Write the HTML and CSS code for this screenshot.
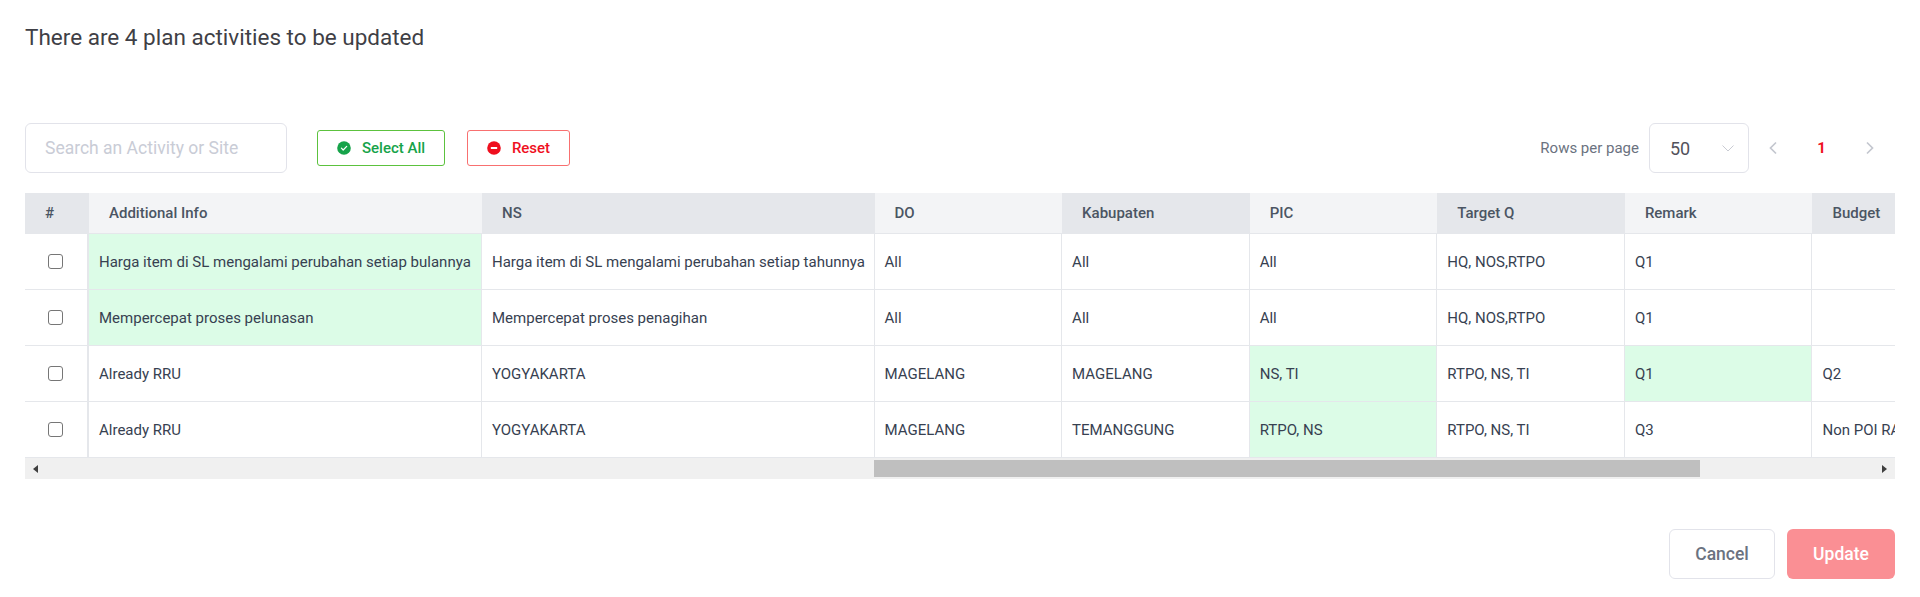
FILE: index.html
```html
<!DOCTYPE html>
<html lang="en">
<head>
<meta charset="utf-8">
<title>Plan activities</title>
<link rel="stylesheet" href="styles.css">
</head>
<body>
<main class="page">
  <h1 class="title">There are 4 plan activities to be updated</h1>
  <div class="toolbar">
    <input class="search" type="text" placeholder="Search an Activity or Site">
    <button class="action action-green" type="button">
      <svg class="action-icon" viewBox="0 0 14 14"><circle cx="7" cy="7" r="6.800" fill="#16a34a"/><path d="M4.400 7.200l1.800 1.800 3.500-3.600" fill="none" stroke="#fff" stroke-width="1.200" stroke-linecap="round" stroke-linejoin="round"/></svg>
      Select All
    </button>
    <button class="action action-red" type="button">
      <svg class="action-icon" viewBox="0 0 14 14"><circle cx="7" cy="7" r="6.800" fill="#ef0f1e"/><rect x="3.800" y="6.100" width="6.400" height="1.800" rx=".5" fill="#fff"/></svg>
      Reset
    </button>
    <div class="pager">
      <span class="pager-label">Rows per page</span>
      <div class="select">
        <span>50</span>
        <svg class="chev-down" viewBox="0 0 12 7"><path d="M.5.5L6 6 11.500.5" fill="none" stroke="#c9cbd3" stroke-width="1"/></svg>
      </div>
      <svg class="pager-arrow pager-prev" viewBox="0 0 8 14"><path d="M7 1.500L1.500 7 7 12.500" fill="none" stroke="#c4c7cf" stroke-width="1.700"/></svg>
      <span class="pager-num">1</span>
      <svg class="pager-arrow pager-next" viewBox="0 0 8 14"><path d="M1 1.500L6.500 7 1 12.500" fill="none" stroke="#c4c7cf" stroke-width="1.700"/></svg>
    </div>
  </div>

  <div class="table-wrap">
    <table class="grid">
      <colgroup>
        <col class="c-num"><col class="c-ai"><col class="c-ns"><col class="c-std"><col class="c-std"><col class="c-std"><col class="c-std"><col class="c-std"><col class="c-std">
      </colgroup>
      <thead>
        <tr>
          <th class="th-num dark">#</th>
          <th class="light">Additional Info</th>
          <th class="dark">NS</th>
          <th class="light">DO</th>
          <th class="dark">Kabupaten</th>
          <th class="light">PIC</th>
          <th class="dark">Target Q</th>
          <th class="light">Remark</th>
          <th class="dark">Budget</th>
        </tr>
      </thead>
      <tbody>
        <tr>
          <td class="td-check"><input class="check" type="checkbox"></td>
          <td class="changed">Harga item di SL mengalami perubahan setiap bulannya</td>
          <td>Harga item di SL mengalami perubahan setiap tahunnya</td>
          <td>All</td><td>All</td><td>All</td><td>HQ, NOS,RTPO</td><td>Q1</td><td></td>
        </tr>
        <tr>
          <td class="td-check"><input class="check" type="checkbox"></td>
          <td class="changed">Mempercepat proses pelunasan</td>
          <td>Mempercepat proses penagihan</td>
          <td>All</td><td>All</td><td>All</td><td>HQ, NOS,RTPO</td><td>Q1</td><td></td>
        </tr>
        <tr>
          <td class="td-check"><input class="check" type="checkbox"></td>
          <td>Already RRU</td>
          <td>YOGYAKARTA</td>
          <td>MAGELANG</td><td>MAGELANG</td><td class="changed">NS, TI</td><td>RTPO, NS, TI</td><td class="changed">Q1</td><td>Q2</td>
        </tr>
        <tr>
          <td class="td-check"><input class="check" type="checkbox"></td>
          <td>Already RRU</td>
          <td>YOGYAKARTA</td>
          <td>MAGELANG</td><td>TEMANGGUNG</td><td class="changed">RTPO, NS</td><td>RTPO, NS, TI</td><td>Q3</td><td>Non POI RAN</td>
        </tr>
      </tbody>
    </table>
    <div class="scrollbar">
      <span class="tri tri-left"></span>
      <div class="track"><div class="thumb"></div></div>
      <span class="tri tri-right"></span>
    </div>
  </div>

  <div class="footer">
    <button class="btn btn-cancel" type="button">Cancel</button>
    <button class="btn btn-update" type="button">Update</button>
  </div>
</main>
</body>
</html>
```

FILE: styles.css
```css
* { box-sizing: border-box; }
html, body { margin: 0; padding: 0; background: #fff; }
body { font-family: Roboto, "Liberation Sans", sans-serif; color: #374151; overflow: hidden; }
.page { padding: 23px 25px 0; }
.title { margin: 0; font-size: 22.500px; font-weight: 400; line-height: 28px; color: #3f3f46; }

.toolbar { display: flex; align-items: center; margin-top: 72px; height: 50px; }
.search { width: 262px; height: 50px; padding: 0 19px; border: 1px solid #e2e3ea; border-radius: 6px; font: 400 17.500px Roboto, sans-serif; outline: none; color: #374151; }
.search::placeholder { color: #c9ccd6; opacity: 1; }
.action { display: flex; align-items: center; justify-content: center; gap: 11px; height: 36px; background: #fff; border-radius: 3px; font: 500 15px Roboto, sans-serif; padding: 0; }
.action-icon { width: 14px; height: 14px; }
.action-green { width: 128px; margin-left: 30px; border: 1px solid #5cc23e; color: #16a34a; }
.action-red { width: 103px; margin-left: 22px; border: 1px solid #f87070; color: #ef0f1e; }
.pager { display: flex; align-items: center; margin-left: auto; }
.pager-label { font-size: 15px; color: #6b7280; margin-right: 10px; }
.select { display: flex; align-items: center; justify-content: space-between; width: 100px; height: 50px; padding: 0 14px 0 20px; border: 1px solid #e2e3ea; border-radius: 6px; font-size: 18px; color: #52525b; }
.chev-down { width: 12px; height: 7px; }
.pager-arrow { width: 8px; height: 14px; }
.pager-prev { margin-left: 20px; }
.pager-next { margin-right: 21px; }
.pager-num { width: 89px; text-align: center; font-size: 15px; font-weight: 700; color: #ef0f1e; }

.table-wrap { margin-top: 20px; width: 1870px; overflow: hidden; }
.grid { border-collapse: separate; border-spacing: 0; table-layout: fixed; width: 1975.100px; font-size: 15px; }
.c-num { width: 64px; }
.c-ai { width: 393px; }
.c-ns { width: 392.500px; }
.c-std { width: 187.600px; }
.grid th { height: 41px; padding: 0 20px; text-align: left; font-weight: 500; color: #4b5563; border-bottom: 1px solid #e5e7eb; }
.dark { background: #e5e7eb; }
.light { background: #f3f4f6; }
.grid td { height: 56px; padding: 0 10px; color: #374151; white-space: nowrap; overflow: hidden; border-right: 1px solid #e5e7eb; border-bottom: 1px solid #e5e7eb; }
.grid td.td-check { padding: 0 0 0 23px; border-right: 2px solid #e5e7eb; }
.grid td.changed { background: #dcfce7; }
.check { appearance: none; -webkit-appearance: none; display: block; margin: 0; width: 15px; height: 15px; background: #fff; border: 1px solid #767676; border-radius: 3px; }

.scrollbar { display: flex; align-items: center; height: 21px; background: #f0f0f0; padding: 0 8px; }
.track { flex: 1; height: 17px; padding-left: 836px; padding-right: 182px; }
.thumb { height: 17px; background: #bfbfbf; }
.tri { width: 0; height: 0; border-top: 4.500px solid transparent; border-bottom: 4.500px solid transparent; }
.tri-left { border-right: 5px solid #3f3f3f; }
.tri-right { border-left: 5px solid #3f3f3f; }

.footer { display: flex; justify-content: flex-end; gap: 12px; margin-top: 50px; }
.btn { height: 50px; border-radius: 6px; font: 500 17.500px Roboto, sans-serif; padding: 0; }
.btn-cancel { width: 106px; background: #fff; border: 1px solid #e2e3ea; color: #6b7280; }
.btn-update { width: 108px; background: #fa8f94; border: 0; color: #fff; }
```
